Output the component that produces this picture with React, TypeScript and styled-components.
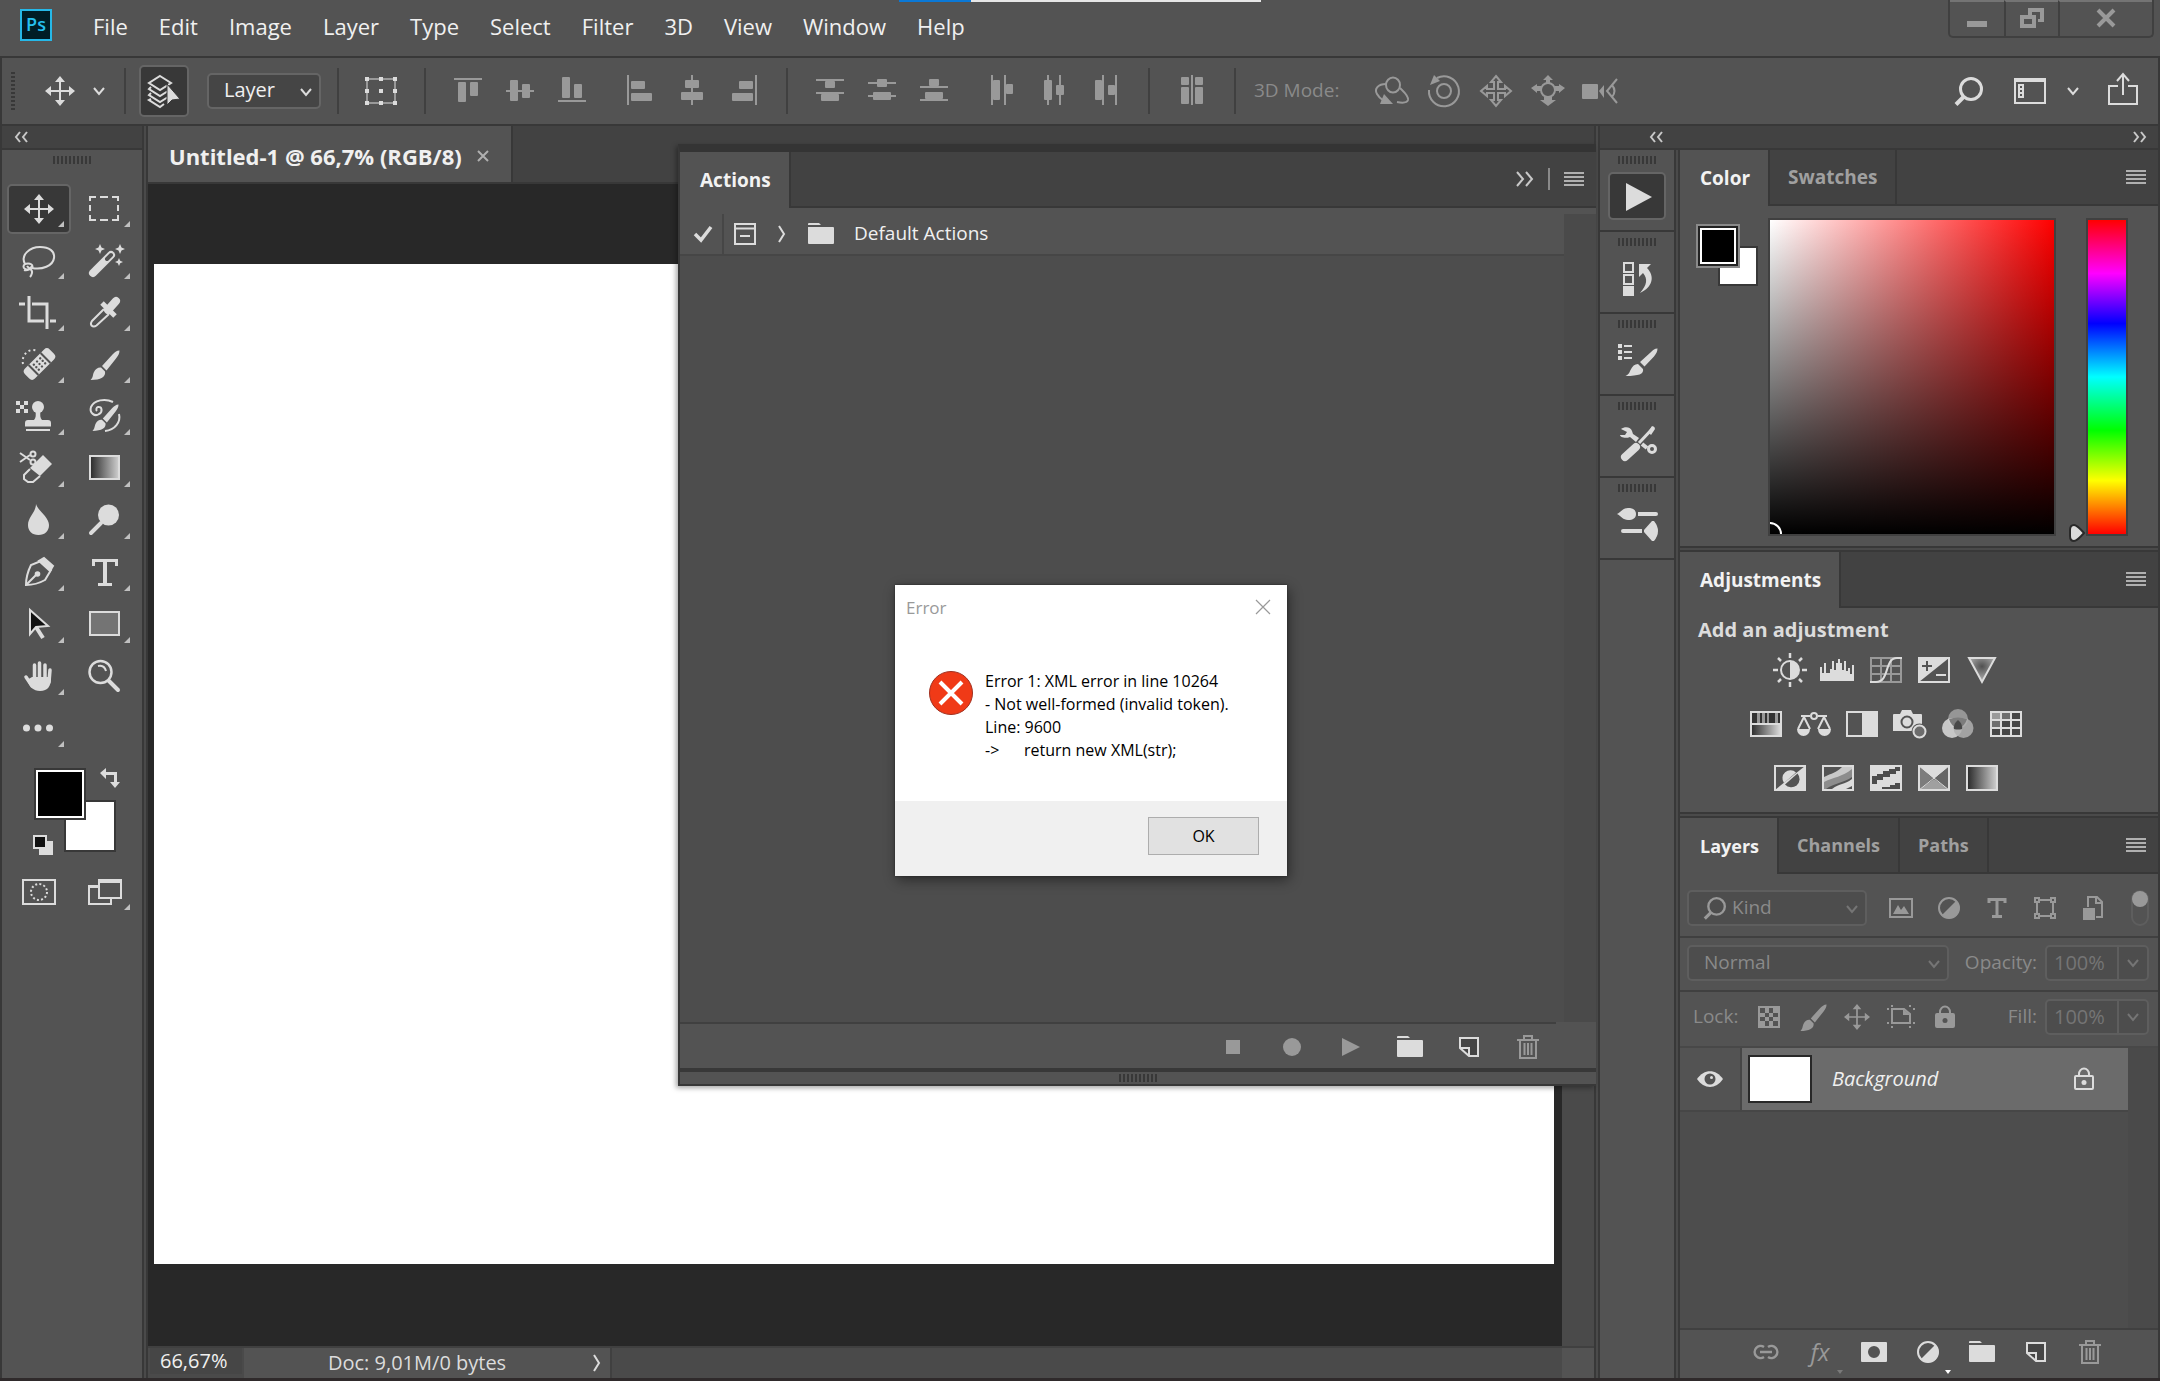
import React from "react";
import styled, { createGlobalStyle, css } from "styled-components";

const c = {
  panel: "#535353",
  header: "#424242",
  line: "#383838",
  gutter: "#4a4a4a",
  well: "#4d4d4d",
  canvas: "#282828",
  icon: "#dcdcdc",
  dim: "#999999",
  faint: "#8a8a8a",
};

const GlobalStyle = createGlobalStyle`
  * { box-sizing: border-box; }
  body {
    margin: 0;
    background: ${c.panel};
    color: #f0f0f0;
    font-family: "Open Sans", "Noto Sans", sans-serif;
    font-size: 19px;
    line-height: 24px;
    overflow: hidden;
  }
  button, select, input { font: inherit; color: inherit; margin: 0; }
  svg { display: block; flex: none; overflow: visible; }
`;

/* ---------- shell ---------- */

const Window = styled.div`
  position: relative;
  display: flex;
  flex-direction: column;
  height: 100vh;
  border-bottom: 3px solid #2f2a2b;
`;

const Workspace = styled.div`
  flex: 1;
  min-height: 0;
  display: flex;
  border-left: 2px solid ${c.line};
  border-right: 2px solid ${c.line};
`;

const Split = styled.div`
  flex: none;
  width: 6px;
  background: #4a4a4a;
  border-left: 2px solid ${c.line};
  border-right: 2px solid ${c.line};
`;

const BareButton = styled.button`
  display: flex;
  align-items: center;
  justify-content: center;
  padding: 0;
  border: 0;
  background: none;
`;

const Grip = styled.div<{ $vertical?: boolean }>`
  flex: none;
  align-self: center;
  width: ${(p) => (p.$vertical ? "4px" : "38px")};
  height: ${(p) => (p.$vertical ? "38px" : "8px")};
  background: repeating-linear-gradient(
    ${(p) => (p.$vertical ? "to bottom" : "to right")},
    ${c.line} 0 2px,
    transparent 2px 4px
  );
`;

/* ---------- menu bar ---------- */

const MenuBar = styled.header`
  display: flex;
  align-items: flex-start;
  height: 58px;
  padding-left: 20px;
  border-bottom: 2px solid ${c.line};
`;

const Logo = styled.div`
  width: 32px;
  height: 32px;
  margin: 9px 26px 0 0;
  border: 2px solid #26b8e8;
  background: #001d26;
  color: #26c0f0;
  font-size: 18px;
  font-weight: 600;
  line-height: 26px;
  text-align: center;
`;

const Menu = styled.nav`
  display: flex;
  flex: 1;
  gap: 1px;
`;

const MenuButton = styled(BareButton)`
  height: 52px;
  padding: 0 15px;
  font-size: 22px;
  line-height: 28px;
`;

const LoadStrip = styled.div`
  position: absolute;
  top: 0;
  left: 899px;
  width: 362px;
  height: 2px;
  background: linear-gradient(to right, #0a78d6 72px, #e6e6e6 72px);
`;

const WindowControls = styled.div`
  display: flex;
  height: 38px;
  margin-right: 6px;
  border: 2px solid #404040;
  border-top: 0;
  border-radius: 0 0 5px 5px;
`;

const WindowButton = styled(BareButton)<{ $wide?: boolean }>`
  width: ${(p) => (p.$wide ? "94px" : "54px")};
  padding-bottom: 2px;
  border-top: 2px solid #747474;
  & + & {
    border-left: 2px solid #404040;
  }
`;

/* ---------- options bar ---------- */

const OptionsBar = styled.div`
  display: flex;
  align-items: center;
  height: 68px;
  border: solid ${c.line};
  border-width: 0 2px 2px;
  padding: 0 20px 0 9px;
`;

const Rule = styled.span<{ $left?: number; $right?: number }>`
  flex: none;
  width: 2px;
  height: 46px;
  margin: 0 ${(p) => p.$right ?? 16}px 0 ${(p) => p.$left ?? 16}px;
  background: #404040;
`;

const OptionSlot = styled(BareButton)`
  width: 52px;
  height: 52px;
`;

const OptionGroup = styled.div`
  display: flex;
  gap: 16px;
`;

const OptionSet = styled.div`
  display: flex;
`;

const MoveIndicator = styled(BareButton)`
  gap: 18px;
  margin-left: 30px;
`;

const AutoSelect = styled(BareButton)`
  width: 50px;
  height: 52px;
  margin-right: 18px;
  border: 2px solid #656565;
  border-radius: 5px;
  background: ${c.line};
`;

const ModeLabel = styled.span`
  width: 112px;
  padding-bottom: 2px;
  color: ${c.faint};
  white-space: nowrap;
`;

const OptionsRight = styled.div`
  display: flex;
  align-items: center;
  margin-left: auto;
`;

const SpacedButton = styled(BareButton)<{ $gap: number }>`
  margin-left: ${(p) => p.$gap}px;
`;

/* ---------- form fields ---------- */

const Field = styled.span<{ $width: number; $dim?: boolean }>`
  position: relative;
  flex: none;
  display: flex;
  align-items: center;
  width: ${(p) => p.$width}px;
  height: 36px;
  border: 2px solid ${(p) => (p.$dim ? "#5e5e5e" : "#656565")};
  border-radius: 5px;
  background: ${(p) => (p.$dim ? c.well : "#454545")};
  color: ${(p) => (p.$dim ? c.faint : "#f0f0f0")};
  font-size: ${(p) => (p.$dim ? 19 : 20)}px;
  svg {
    position: absolute;
    pointer-events: none;
  }
  svg:last-child {
    right: 7px;
    top: 13px;
  }
  svg:first-child {
    left: 15px;
    top: 5px;
  }
`;

const Select = styled.select<{ $pad: number }>`
  width: 100%;
  height: 100%;
  padding: 0 0 2px ${(p) => p.$pad}px;
  border: 0;
  background: transparent;
  appearance: none;
`;

const Percent = styled.span`
  display: flex;
  flex: none;
  width: 104px;
  height: 36px;
  border: 2px solid #5e5e5e;
  border-radius: 5px;
  background: ${c.well};
  color: #757575;
  font-size: 20px;
`;

const PercentInput = styled.input`
  width: 70px;
  padding: 0 0 0 7px;
  border: 0;
  background: transparent;
`;

const PercentButton = styled(BareButton)`
  flex: 1;
  border-left: 2px solid #5e5e5e;
`;

/* ---------- toolbox ---------- */

const ToolBox = styled.aside`
  flex: none;
  display: flex;
  flex-direction: column;
  width: 140px;
`;

const DockHeader = styled.div`
  flex: none;
  display: flex;
  align-items: center;
  height: 24px;
  background: ${c.header};
  border-bottom: 2px solid ${c.line};
`;

const ToolHeader = styled(DockHeader)`
  padding-left: 12px;
`;

const ToolBody = styled.div`
  display: flex;
  flex-direction: column;
  padding: 6px 4px 0;
`;

const ToolGrid = styled.div<{ $first?: boolean }>`
  display: grid;
  grid-template-columns: 66px 66px;
  grid-auto-rows: 52px;
  margin-top: ${(p) => (p.$first ? 19 : 0)}px;
`;

const ToolButton = styled(BareButton)<{ $active?: boolean; $more?: boolean }>`
  position: relative;
  border: 2px solid transparent;
  margin: 1px;
  border-radius: 5px;
  ${(p) =>
    p.$active &&
    css`
      background: ${c.line};
      border-color: #656565;
    `}
  ${(p) =>
    p.$more &&
    css`
      &::after {
        content: "";
        position: absolute;
        right: 5px;
        bottom: 5px;
        border: 3px solid transparent;
        border-right-color: #c0c0c0;
        border-bottom-color: #c0c0c0;
      }
    `}
`;

const SwatchArea = styled.div`
  display: grid;
  grid-template-columns: 26px 30px 22px 30px;
  grid-template-rows: 32px 20px 32px 3px;
  margin: 13px 0 11px;
  padding-left: 2px;
`;

const Chip = styled(BareButton)<{ $color: string; $area: string; $ring?: boolean }>`
  grid-area: ${(p) => p.$area};
  border: 2px solid ${c.line};
  background: ${(p) => p.$color};
  box-shadow: ${(p) => (p.$ring ? "inset 0 0 0 2px #fff" : "none")};
  z-index: ${(p) => (p.$ring ? 1 : 0)};
`;

const SwapButton = styled(BareButton)`
  grid-area: 1 / 4 / 2 / 5;
  align-items: flex-start;
  justify-content: flex-end;
  margin-right: -4px;
`;

const DefaultButton = styled(BareButton)`
  grid-area: 3 / 1 / 5 / 3;
  align-items: flex-end;
  justify-content: flex-start;
  padding-left: 25px;
`;

/* ---------- document ---------- */

const Document = styled.main`
  position: relative;
  flex: 1;
  min-width: 0;
  display: flex;
  flex-direction: column;
`;

const DocTabs = styled.div`
  display: flex;
  height: 58px;
  background: ${c.header};
  border-bottom: 2px solid ${c.line};
`;

const DocTab = styled.div`
  display: flex;
  align-items: center;
  gap: 15px;
  padding: 3px 22px 0 21px;
  background: ${c.panel};
  border-right: 2px solid ${c.line};
  font-size: 22px;
  font-weight: 700;
  white-space: nowrap;
`;

const Stage = styled.div`
  flex: 1;
  display: flex;
  background: ${c.canvas};
`;

const Paper = styled.div`
  flex: 1;
  margin: 80px 8px 82px 6px;
  background: #fff;
`;

const Gutter = styled.div<{ $width: number }>`
  flex: none;
  width: ${(p) => p.$width}px;
  background: ${c.gutter};
`;

const StatusBar = styled.footer`
  display: flex;
  height: 32px;
  border-top: 2px solid #404040;
  background: ${c.gutter};
  font-size: 20px;
`;

const ZoomInput = styled.input`
  width: 92px;
  height: 26px;
  margin: 0 2px;
  padding: 0 0 2px 10px;
  border: 0;
  background: #464646;
`;

const DocInfo = styled(BareButton)`
  width: 368px;
  justify-content: space-between;
  padding: 0 9px 0 84px;
  background: ${c.panel};
  border-right: 2px solid #404040;
  color: ${c.icon};
`;

const StatusCorner = styled.div`
  width: 32px;
  margin-left: auto;
  background: ${c.panel};
`;

/* ---------- tab strips ---------- */

const Tab = styled.button<{ $active?: boolean }>`
  padding: 0 18px 0;
  border: solid ${c.line};
  border-width: 0 2px ${(p) => (p.$active ? 0 : 2)}px 0;
  background: ${(p) => (p.$active ? c.panel : "transparent")};
  color: ${(p) => (p.$active ? "#f2f2f2" : "#a0a0a0")};
  font-weight: 700;
  &:first-child {
    padding-left: 20px;
  }
`;

const TabStrip = styled.div<{ $compact?: boolean }>`
  flex: none;
  display: flex;
  align-items: stretch;
  height: 56px;
  background: ${c.header};
  ${Tab} {
    font-size: ${(p) => (p.$compact ? 18 : 19)}px;
  }
`;

const TabRest = styled.div`
  flex: 1;
  display: flex;
  align-items: center;
  justify-content: flex-end;
  gap: 14px;
  padding-right: 12px;
  border-bottom: 2px solid ${c.line};
`;

const TabRule = styled.span`
  width: 2px;
  height: 22px;
  background: #8a8a8a;
`;

/* ---------- actions panel ---------- */

const ActionsPanel = styled.section`
  position: absolute;
  top: 18px;
  left: 530px;
  right: -2px;
  height: 942px;
  display: flex;
  flex-direction: column;
  border: solid ${c.line};
  border-width: 8px 0 2px 2px;
  border-top-color: #343434;
  background: ${c.panel};
  box-shadow: -2px 2px 5px rgba(0, 0, 0, 0.35);
`;

const ActionsBody = styled.div`
  flex: 1;
  display: flex;
  margin-top: 6px;
`;

const ActionsList = styled.div`
  flex: 1;
  background: ${c.well};
`;

const ActionRow = styled.div`
  display: flex;
  align-items: center;
  height: 42px;
  background: ${c.panel};
  border-bottom: 2px solid #464646;
`;

const ActionName = styled.span`
  padding-bottom: 2px;
`;

const CheckLabel = styled.label`
  position: relative;
  display: flex;
  align-items: center;
  justify-content: center;
  align-self: stretch;
  width: 44px;
  padding-left: 3px;
  border-right: 2px solid #464646;
  input {
    position: absolute;
    opacity: 0;
  }
`;

const RowIcons = styled.span`
  display: flex;
  align-items: center;
  gap: 22px;
  padding: 0 20px 0 10px;
`;

const ActionsFooter = styled.div`
  display: grid;
  grid-template-columns: repeat(6, 59px);
  justify-content: end;
  align-items: center;
  height: 44px;
  padding: 2px 39px 0 0;
`;

const FooterRule = styled.div`
  height: 2px;
  margin-right: 40px;
  background: #404040;
`;

const ResizeBar = styled.div`
  display: flex;
  justify-content: center;
  align-items: flex-start;
  height: 16px;
  border-top: 4px solid ${c.line};
`;

/* ---------- icon dock ---------- */

const RightSide = styled.div`
  flex: none;
  display: flex;
  flex-direction: column;
`;

const SideHeader = styled(DockHeader)`
  justify-content: space-between;
  padding: 0 11px 0 49px;
`;

const SideBody = styled.div`
  flex: 1;
  min-height: 0;
  display: flex;
`;

const IconDock = styled.div`
  width: 74px;
`;

const DockGroup = styled.div`
  display: flex;
  flex-direction: column;
  align-items: center;
  gap: 8px;
  height: 82px;
  padding-top: 6px;
  border-bottom: 2px solid ${c.line};
`;

const DockButton = styled(BareButton)<{ $active?: boolean }>`
  width: 58px;
  height: 48px;
  padding: 2px 0 0 2px;
  border-radius: 5px;
  border: 2px solid ${(p) => (p.$active ? "#656565" : "transparent")};
  background: ${(p) => (p.$active ? c.line : "transparent")};
`;

/* ---------- right panels ---------- */

const Panels = styled.div`
  display: flex;
  flex-direction: column;
  gap: 2px;
  width: 478px;
  background: #4a4a4a;
`;

const Panel = styled.section<{ $grow?: boolean; $first?: boolean }>`
  display: flex;
  flex-direction: column;
  flex: ${(p) => (p.$grow ? "1" : "none")};
  background: ${c.panel};
  border-bottom: ${(p) => (p.$grow ? 0 : 2)}px solid ${c.line};
  border-top: ${(p) => (p.$first ? 0 : 2)}px solid ${c.line};
`;

const ColorBody = styled.div`
  display: flex;
  height: 340px;
  padding: 12px 30px 0 16px;
`;

const ColorChips = styled.div`
  display: grid;
  grid-template-columns: 22px 22px 18px;
  grid-template-rows: 22px 22px 18px;
  width: 72px;
  padding-top: 6px;
`;

const ColorChip = styled(BareButton)<{ $area: string; $front?: boolean }>`
  grid-area: ${(p) => p.$area};
  border: 2px solid ${(p) => (p.$front ? "#8a8a8a" : c.line)};
  background: ${(p) => (p.$front ? "#000" : "#fff")};
  box-shadow: ${(p) =>
    p.$front ? "inset 0 0 0 2px #222, inset 0 0 0 4px #fff" : "none"};
  z-index: ${(p) => (p.$front ? 1 : 0)};
`;

const ColorField = styled.div`
  flex: 1;
  height: 318px;
  border: 2px solid #404040;
  overflow: hidden;
  display: flex;
  align-items: flex-end;
  background: linear-gradient(to bottom, transparent, #000),
    linear-gradient(to right, #fff, #f00);
`;

const HueColumn = styled.label`
  position: relative;
  display: flex;
  align-items: flex-end;
  margin-left: 12px;
  height: 324px;
  gap: 1px;
  input {
    position: absolute;
    inset: 0;
    width: 100%;
    opacity: 0;
  }
`;

const HueBar = styled.span`
  align-self: flex-start;
  width: 42px;
  height: 318px;
  border: 2px solid #404040;
  background: linear-gradient(
    to bottom,
    #f00,
    #f0f 17%,
    #00f 33%,
    #0ff 50%,
    #0f0 67%,
    #ff0 83%,
    #f00
  );
`;

const AdjustBody = styled.div`
  height: 204px;
  padding: 9px 18px 0;
`;

const AdjustTitle = styled.h2`
  margin: 0;
  color: ${c.icon};
  font-size: 20px;
  font-weight: 700;
  line-height: 26px;
`;

const AdjustRows = styled.div`
  width: 288px;
  margin-left: 44px;
`;

const AdjustRow = styled.div`
  display: flex;
  justify-content: center;
  height: 54px;
`;

const AdjustButton = styled(BareButton)`
  width: 48px;
`;

const LayerBar = styled.div<{ $tall?: boolean; $last?: boolean }>`
  display: flex;
  align-items: center;
  height: ${(p) => (p.$tall ? 64 : p.$last ? 56 : 54)}px;
  padding: ${(p) => (p.$tall ? "6px 9px 0 7px" : p.$last ? "0 9px 4px 7px" : "0 9px 2px 7px")};
  border-bottom: 2px solid ${(p) => (p.$last ? "#484848" : "#404040")};
  color: ${c.faint};
`;

const FilterIcons = styled.div`
  display: grid;
  grid-template-columns: repeat(5, 48px);
  margin-left: 10px;
  flex: 1;
`;

const LockIcons = styled.div`
  display: grid;
  grid-template-columns: repeat(5, 44px);
  margin-left: 8px;
`;

const FilterToggle = styled.label`
  display: flex;
  width: 18px;
  height: 36px;
  border: 2px solid #5e5e5e;
  border-radius: 9px;
  input {
    appearance: none;
    flex: none;
    width: 16px;
    height: 16px;
    margin: -1px;
    border-radius: 50%;
    background: ${c.dim};
  }
`;

const PushLabel = styled.label`
  margin: 0 8px 0 auto;
  padding-bottom: 2px;
`;

const LockLabel = styled.span`
  padding: 0 0 2px 6px;
  width: 52px;
`;

const LayerArea = styled.div`
  flex: 1;
  display: flex;
`;

const LayerList = styled.div`
  flex: 1;
  background: ${c.well};
`;

const LayerRow = styled.div`
  display: flex;
  height: 64px;
  border-bottom: 2px solid #464646;
`;

const EyeCell = styled(BareButton)`
  width: 62px;
  background: ${c.panel};
  border-right: 2px solid #464646;
`;

const LayerMain = styled.div`
  flex: 1;
  display: flex;
  align-items: center;
  gap: 20px;
  padding: 0 34px 0 6px;
  background: #6b6b6b;
  font-size: 20px;
  font-style: italic;
  svg {
    margin-left: auto;
  }
`;

const Thumb = styled.span`
  width: 64px;
  height: 48px;
  border: 2px solid ${c.canvas};
  background: #fff;
`;

const LayerFooter = styled.div`
  display: grid;
  grid-template-columns: repeat(7, 54px);
  justify-content: end;
  align-items: stretch;
  height: 50px;
  padding-right: 41px;
  border-top: 2px solid #404040;
`;

const FooterButton = styled(BareButton)<{ $marker?: string }>`
  position: relative;
  padding-bottom: 4px;
  &::after {
    content: ${(p) => (p.$marker ? '""' : "none")};
    position: absolute;
    right: 4px;
    bottom: 4px;
    border: solid transparent;
    border-width: 4px 3px 0;
    border-top-color: ${(p) => p.$marker};
  }
`;

const FxText = styled.span`
  color: ${c.dim};
  font-size: 24px;
  font-style: italic;
`;

/* ---------- dialog ---------- */

const Dialog = styled.section`
  position: absolute;
  top: 585px;
  left: 895px;
  width: 392px;
  background: #fff;
  color: #000;
  font-size: 16px;
  line-height: 23px;
  box-shadow: 0 0 2px #222, 2px 4px 12px rgba(0, 0, 0, 0.45);
`;

const DialogTitle = styled.header`
  display: flex;
  align-items: center;
  justify-content: space-between;
  height: 44px;
  padding: 0 16px 0 11px;
  color: #999;
  font-size: 17px;
`;

const DialogBody = styled.div`
  display: flex;
  gap: 12px;
  height: 172px;
  padding: 41px 0 0 34px;
`;

const DialogText = styled.p`
  margin: 0;
  white-space: pre;
  tab-size: 39px;
`;

const DialogIcon = styled.span`
  padding-top: 1px;
`;

const DialogFooter = styled.footer`
  display: flex;
  justify-content: flex-end;
  height: 75px;
  padding: 16px 28px 0 0;
  background: #f0f0f0;
`;

const OkButton = styled.button`
  width: 111px;
  height: 38px;
  border: 1px solid #adadad;
  background: #e1e1e1;
`;

/* ---------- drawings ---------- */

type G = { w?: number; h?: number; color?: string; children?: React.ReactNode };
const Glyph = ({ w = 36, h = 36, color = c.icon, children }: G) => (
  <svg width={w} height={h} viewBox={`0 0 ${w} ${h}`} fill={color} stroke="none" aria-hidden="true">
    {children}
  </svg>
);

const Bars = ({ r, w = 28 }: { r: number[][]; w?: number }) => (
  <Glyph w={w} h={32} color={c.dim}>
    {r.map((b, i) => (
      <rect key={i} x={b[0]} y={b[1]} width={b[2]} height={b[3]} rx={b[2] > 3 && b[3] > 3 ? 1 : 0} />
    ))}
  </Glyph>
);

const Chevron = ({ color = c.icon, w = 12 }: { color?: string; w?: number }) => (
  <Glyph w={w} h={8} color="none">
    <path d={`M1 1l${w / 2 - 1} 6l${w / 2 - 1}-6`} stroke={color} strokeWidth="2" />
  </Glyph>
);

const Double = ({ left, w = 14, h = 10 }: { left?: boolean; w?: number; h?: number }) => (
  <Glyph w={w} h={h} color="none">
    <g transform={left ? `translate(${w} 0) scale(-1 1)` : undefined} stroke="#c8c8c8" strokeWidth="2">
      <path d={`M1 0l${w / 2 - 3} ${h / 2}l-${w / 2 - 3} ${h / 2}`} />
      <path d={`M${w / 2 + 1} 0l${w / 2 - 3} ${h / 2}l-${w / 2 - 3} ${h / 2}`} />
    </g>
  </Glyph>
);

const Hamburger = () => (
  <Glyph w={20} h={14} color="#b0b0b0">
    <path d="M0 0h20v2H0zM0 4h20v2H0zM0 8h20v2H0zM0 12h20v2H0z" />
  </Glyph>
);

const MoveArrows = ({ s = 30, color = c.icon }: { s?: number; color?: string }) => (
  <svg width={s} height={s} viewBox="0 0 30 30" fill={color} aria-hidden="true">
    <path d="M15 0l5 6h-4v8h8v-4l6 5-6 5v-4h-8v8h4l-5 6-5-6h4v-8H6v4l-6-5 6-5v4h8V6h-4z" />
  </svg>
);

const Brush = ({ s = 30, color = c.icon }: { s?: number; color?: string }) => (
  <svg width={s} height={s} viewBox="0 0 30 30" fill={color} aria-hidden="true">
    <path d="M29.5 0.5c-3 0-5 2-7 4L12 16l4.500 4.500L26 8.500c2-2.500 3.500-5 3.500-8zM11 17.500l4 4c1 5-4 8.500-14.500 8.500 3-3 2-5 3.500-8 1.500-3.500 4.500-5 7-4.500z" />
  </svg>
);

const Folder = ({ color = c.icon }) => (
  <Glyph w={26} h={22} color={color}>
    <path d="M0 1q0-1 1-1h10l2 2H0zM0 4h25q1 0 1 1v15q0 1-1 1H1q-1 0-1-1z" />
  </Glyph>
);

const NewPage = () => (
  <Glyph w={20} h={20} color="none">
    <path d="M1 11V1h18v18h-9z" fill="#454545" stroke={c.icon} strokeWidth="2" />
    <path d="M1 11h9v8" stroke={c.icon} strokeWidth="2" />
  </Glyph>
);

const Trash = () => (
  <Glyph w={22} h={24} color="none">
    <path d="M0 5h22M7 4.500V1h8v3.500M3 6v17h16V6M7.500 8v12M11 8v12M14.500 8v12" stroke={c.dim} strokeWidth="2" />
  </Glyph>
);

const HalfDisc = ({ color = c.icon }) => (
  <Glyph w={22} h={22} color={color}>
    <circle cx="11" cy="11" r="10" fill="none" stroke={color} strokeWidth="2" />
    <path d="M18.500 3.500a10.500 10.500 0 0 1-15 15z" />
  </Glyph>
);

const Lens = ({ s = 28, color = c.icon }: { s?: number; color?: string }) => (
  <svg width={s} height={s} viewBox="0 0 28 28" fill="none" stroke={color} aria-hidden="true">
    <circle cx="16" cy="12" r="10.500" strokeWidth="3" />
    <path d="M9 19.500L1 27.500" strokeWidth="4" />
  </svg>
);

const TransformBox = () => (
  <Glyph w={32} h={30} color="none">
    <rect x="2" y="3" width="28" height="24" stroke={c.dim} strokeWidth="2" />
    <path
      d="M0 1h4v4H0zM14 1h4v4h-4zM28 1h4v4h-4zM0 13h4v4H0zM28 13h4v4h-4zM0 25h4v4H0zM14 25h4v4h-4zM28 25h4v4h-4zM14 13h4v4h-4z"
      fill={c.icon}
    />
  </Glyph>
);

const LayersCursor = () => (
  <Glyph w={32} h={34} color="none">
    <g stroke={c.icon} strokeWidth="2">
      <path d="M12 2l11 7-11 7L1 9z" />
      <path d="M3 13l-2 2 11 7 8-5M3 19l-2 2 11 7 8-5M3 25l-2 1 11 7 4-3" />
    </g>
    <path d="M19 10v21l5-5 8-1z" fill={c.icon} stroke={c.line} strokeWidth="1" />
  </Glyph>
);

const Sparkle = ({ x, y, r }: { x: number; y: number; r: number }) => (
  <path
    d={`M${x} ${y - r}l${r * 0.3} ${r * 0.7} ${r * 0.7} ${r * 0.3}-${r * 0.7} ${r * 0.3}-${r * 0.3} ${r * 0.7}-${r * 0.3}-${r * 0.7}-${r * 0.7}-${r * 0.3} ${r * 0.7}-${r * 0.3}z`}
  />
);

const tools: { name: string; more?: boolean; active?: boolean; art: React.ReactNode }[] = [
  { name: "Move", more: true, active: true, art: <MoveArrows /> },
  {
    name: "Marquee",
    more: true,
    art: (
      <Glyph>
        <path
          d="M3 10V6h6M13 6h8M25 6h6v4M31 14v6M31 24v5h-6M21 29h-8M9 29H3v-5M3 20v-6"
          fill="none"
          stroke={c.icon}
          strokeWidth="2"
        />
      </Glyph>
    ),
  },
  {
    name: "Lasso",
    more: true,
    art: (
      <Glyph>
        <g fill="none" stroke={c.icon} strokeWidth="2">
          <path d="M4 21C-1 12 9 4 19 4c9 0 15 4 14 11-1 8-12 12-22 10" />
          <ellipse cx="7" cy="23.500" rx="4.500" ry="3" />
          <path d="M6 23c2 3 6 3 5 7-.5 2-1 3-2 4M3 27c3 1 6-1 8-4" />
        </g>
      </Glyph>
    ),
  },
  {
    name: "Magic wand",
    more: true,
    art: (
      <Glyph>
        <path d="M6 30L24 12" stroke={c.icon} strokeWidth="8" strokeLinecap="round" />
        <path d="M20 16l4-4" stroke={c.panel} strokeWidth="4" strokeLinecap="round" />
        <Sparkle x={13} y={6} r={5} />
        <Sparkle x={33} y={6} r={5} />
        <Sparkle x={32} y={19} r={4} />
      </Glyph>
    ),
  },
  {
    name: "Crop",
    more: true,
    art: (
      <Glyph>
        <path d="M-2 9h6M8 1v25h15M11 9h15v25M29 26h6" fill="none" stroke={c.icon} strokeWidth="3" />
      </Glyph>
    ),
  },
  {
    name: "Eyedropper",
    more: true,
    art: (
      <Glyph>
        <path d="M21 15L29 6" stroke={c.icon} strokeWidth="8" strokeLinecap="round" />
        <path d="M15 8l13 13" stroke={c.icon} strokeWidth="5" />
        <path
          d="M17 14L5 26c-1.500 2-1.500 3-.5 4.500 1.500 1.500 3 1.500 5 0L22 19"
          fill="none"
          stroke={c.icon}
          strokeWidth="2"
        />
      </Glyph>
    ),
  },
  {
    name: "Healing brush",
    more: true,
    art: (
      <Glyph>
        <path d="M2 17C0 8 8 0 17 4" fill="none" stroke={c.icon} strokeWidth="2" strokeDasharray="2 3" />
        <g transform="rotate(-45 18.500 17)">
          <rect x="1" y="10" width="35" height="14" rx="4" />
          <path d="M10 10v14M27 10v14" stroke={c.panel} strokeWidth="2" />
          <g fill={c.panel}>
            <circle cx="14" cy="13.500" r="1.200" /><circle cx="18.500" cy="13.500" r="1.200" /><circle cx="23" cy="13.500" r="1.200" />
            <circle cx="14" cy="17" r="1.200" /><circle cx="18.500" cy="17" r="1.200" /><circle cx="23" cy="17" r="1.200" />
            <circle cx="14" cy="20.500" r="1.200" /><circle cx="18.500" cy="20.500" r="1.200" /><circle cx="23" cy="20.500" r="1.200" />
          </g>
        </g>
      </Glyph>
    ),
  },
  { name: "Brush", more: true, art: <Brush /> },
  {
    name: "Clone stamp",
    more: true,
    art: (
      <Glyph>
        <path d="M-5 2h4v4h-4zM3 2h4v4H3zM-1 6h4v4h-4zM-5 10h4v4h-4zM3 10h4v4H3z" />
        <circle cx="17" cy="8" r="6" />
        <path d="M14.500 12h5c-.5 4-.5 7 1.500 9h6q3 0 3 3v3.500H4V24q0-3 3-3h6c2-2 2-5 1.500-9zM5 30h24v2H5z" />
      </Glyph>
    ),
  },
  {
    name: "History brush",
    more: true,
    art: (
      <Glyph>
        <g transform="translate(5 5) scale(.9)">
          <path d="M29.500 0.500c-3 0-5 2-7 4L12 16l4.500 4.500L26 8.500c2-2.500 3.500-5 3.500-8zM11 17.500l4 4c1 5-4 8.500-14.500 8.500 3-3 2-5 3.500-8 1.500-3.500 4.500-5 7-4.500z" />
        </g>
        <path
          d="M26 3C18-1 7 1 4 8c-2 6 4 10 8 7 4-2 3-8-1-7-2 .5-2 3-1 4M32 15c2 8-4 16-14 17"
          fill="none"
          stroke={c.icon}
          strokeWidth="2"
        />
      </Glyph>
    ),
  },
  {
    name: "Background eraser",
    more: true,
    art: (
      <Glyph>
        <path d="M22 4l9 9-12 12-10-8z" />
        <path d="M9 18l-6 6v4l4 3h5l7-6" fill="none" stroke={c.icon} strokeWidth="2" />
        <g fill="none" stroke={c.icon} strokeWidth="2">
          <path d="M-1 2l10 7M-1 11l10-7" />
          <circle cx="12" cy="3" r="2.500" />
          <circle cx="12" cy="11" r="2.500" />
        </g>
      </Glyph>
    ),
  },
  {
    name: "Gradient",
    more: true,
    art: (
      <Glyph>
        <linearGradient id="toolGradient">
          <stop offset="0" stopColor="#282828" />
          <stop offset="1" stopColor="#d0d0d0" />
        </linearGradient>
        <rect x="3" y="5" width="29" height="23" fill="url(#toolGradient)" stroke={c.icon} strokeWidth="2" />
      </Glyph>
    ),
  },
  {
    name: "Blur",
    more: true,
    art: (
      <Glyph>
        <path d="M15 1c2 7 13 13 13 21 0 6-4 10-10.500 10S7 28 7 22C7 14 15 9 15 1z" />
      </Glyph>
    ),
  },
  {
    name: "Dodge",
    more: true,
    art: (
      <Glyph>
        <circle cx="21.500" cy="12" r="10.500" />
        <path d="M14 20L4 30" stroke={c.icon} strokeWidth="4" strokeLinecap="round" />
      </Glyph>
    ),
  },
  {
    name: "Pen",
    more: true,
    art: (
      <Glyph>
        <path d="M20 6l-10 4c-3 6-5 12-5 20 6 0 12-1 19-5l6-10z" fill="none" stroke={c.icon} strokeWidth="2" />
        <path d="M23 3l9 8-3 5-11-10zM6 29l10-10" stroke={c.icon} strokeWidth="2" />
        <circle cx="16.500" cy="19" r="2.800" />
      </Glyph>
    ),
  },
  {
    name: "Type",
    more: true,
    art: (
      <Glyph>
        <path d="M6.500 11V5.500h23V11M18 6v24M11 29.500h14" fill="none" stroke={c.icon} strokeWidth="3" />
        <path d="M18 6v24" stroke={c.icon} strokeWidth="4" />
      </Glyph>
    ),
  },
  {
    name: "Path selection",
    more: true,
    art: (
      <Glyph>
        <path d="M15 20l7 11" stroke={c.icon} strokeWidth="4" />
        <path d="M9 3v24l6-7 12-1z" fill="#111" stroke={c.icon} strokeWidth="2" />
      </Glyph>
    ),
  },
  {
    name: "Rectangle",
    more: true,
    art: (
      <Glyph>
        <rect x="3" y="5" width="29" height="23" fill="#747474" stroke={c.icon} strokeWidth="2" />
      </Glyph>
    ),
  },
  {
    name: "Hand",
    more: true,
    art: (
      <Glyph>
        <g stroke={c.icon} strokeWidth="3.500" strokeLinecap="round">
          <path d="M13.500 6v14M18.500 4v14M24 6v14M29 11l-1 12M5 18l6 9" />
        </g>
        <path d="M11 18h19c0 9-3 14-11 14-7 0-10-4-13-11z" />
      </Glyph>
    ),
  },
  {
    name: "Zoom",
    art: (
      <Glyph>
        <g fill="none" stroke={c.icon} strokeWidth="2">
          <circle cx="13.500" cy="13" r="11" strokeWidth="2.500" />
          <path d="M11 7c4-1 7 1 8 5" />
          <path d="M22 22l9 9" strokeWidth="4" strokeLinecap="round" />
        </g>
      </Glyph>
    ),
  },
  {
    name: "Edit toolbar",
    more: true,
    art: (
      <Glyph>
        <circle cx="5.500" cy="17" r="3.500" />
        <circle cx="17" cy="17" r="3.500" />
        <circle cx="28.500" cy="17" r="3.500" />
      </Glyph>
    ),
  },
];

const QuickMask = () => (
  <Glyph w={34} h={26} color="none">
    <rect x="1" y="1" width="32" height="24" stroke={c.icon} strokeWidth="2" />
    <circle cx="17" cy="13" r="8" stroke={c.icon} strokeWidth="2" strokeDasharray="2 2.200" />
  </Glyph>
);

const ScreenMode = () => (
  <Glyph w={34} h={26} color="none">
    <path d="M11 7H1v18h22v-6" stroke={c.icon} strokeWidth="2" />
    <rect x="11" y="2" width="22" height="17" stroke={c.icon} strokeWidth="2" />
    <path d="M10 0h24v4H10zM0 6h10v3H0z" fill={c.icon} />
  </Glyph>
);

const Frame = ({ children, fill = "none" }: { children?: React.ReactNode; fill?: string }) => (
  <Glyph w={32} h={26}>
    {children}
    <rect x="1" y="1" width="30" height="24" fill={fill} stroke={c.icon} strokeWidth="2" />
  </Glyph>
);

const adjustments: { name: string; art: React.ReactNode }[][] = [
  [
    {
      name: "Brightness/Contrast",
      art: (
        <Glyph w={34} h={34}>
          <circle cx="17" cy="17" r="9" fill="none" stroke={c.icon} strokeWidth="2" />
          <path d="M17 8a9 9 0 0 1 0 18z" />
          <path
            d="M17 0v5M17 29v5M0 17h5M29 17h5M5 5l3 3M26 26l3 3M5 29l3-3M26 8l3-3"
            stroke={c.icon}
            strokeWidth="2.500"
          />
        </Glyph>
      ),
    },
    {
      name: "Levels",
      art: (
        <Glyph w={36} h={26}>
          <path d="M0 24V10h2v6h2V6h2v10h4V12h2V4h2v9h2V6h2V2h2v4h2v7h2V4h2v10h2V11h2v6h2V8h2v16z" />
        </Glyph>
      ),
    },
    {
      name: "Curves",
      art: (
        <Glyph w={32} h={26} color="none">
          <path d="M1 1h30v24H1zM11 1v24M21 1v24M1 9h30M1 17h30" stroke={c.dim} strokeWidth="2" />
          <path d="M0 25h6C20 25 14 1 27 1h5" stroke={c.icon} strokeWidth="2" />
        </Glyph>
      ),
    },
    {
      name: "Exposure",
      art: (
        <Frame>
          <path d="M1 1h30L1 25z" />
          <path d="M4 9h10M9 4v10" stroke={c.panel} strokeWidth="2" />
          <path d="M18 18h10" stroke={c.icon} strokeWidth="2" />
        </Frame>
      ),
    },
    {
      name: "Vibrance",
      art: (
        <Glyph w={30} h={28}>
          <radialGradient id="vibrance" cx=".5" cy=".35" r=".5">
            <stop offset="0" stopColor="#505050" />
            <stop offset="1" stopColor="#a0a0a0" />
          </radialGradient>
          <path d="M2 2h26L15 26z" fill="url(#vibrance)" stroke={c.icon} strokeWidth="2" />
        </Glyph>
      ),
    },
  ],
  [
    {
      name: "Hue/Saturation",
      art: (
        <Frame>
          <linearGradient id="hueFade">
            <stop offset="0" stopColor="#303030" />
            <stop offset="1" stopColor="#d8d8d8" />
          </linearGradient>
          <path d="M2 2h5v10H2zM10 2h2v10h-2zM15 2h2v10h-2zM19 2h6v10h-6zM28 2h2v10h-2z" fill="#333" />
          <path d="M7 2h3v10H7zM12 2h3v10h-3zM17 2h2v10h-2zM25 2h3v10h-3z" fill="#999" />
          <rect x="2" y="14" width="28" height="10" fill="url(#hueFade)" />
          <rect x="1" y="12" width="30" height="2" />
        </Frame>
      ),
    },
    {
      name: "Color Balance",
      art: (
        <Glyph w={34} h={26} color="none">
          <path d="M4 5h9M21 5h9M7 6L1 18M7 6l6 12M27 6l-6 12M27 6l6 12" stroke={c.icon} strokeWidth="2" />
          <circle cx="17" cy="5" r="3" stroke={c.icon} strokeWidth="2" />
          <path d="M0 18h13a6.500 7 0 0 1-13 0zM21 18h13a6.500 7 0 0 1-13 0z" fill={c.icon} />
        </Glyph>
      ),
    },
    {
      name: "Black & White",
      art: (
        <Frame>
          <path d="M16 1h15v24H16z" />
        </Frame>
      ),
    },
    {
      name: "Photo Filter",
      art: (
        <Glyph w={34} h={30}>
          <path d="M0 6q0-1 1-1h6l2-4h9l2 4h8q1 0 1 1v16H0z" />
          <circle cx="14" cy="13" r="5.500" fill={c.icon} stroke={c.panel} strokeWidth="2" />
          <circle cx="26.500" cy="22.500" r="8" fill={c.panel} />
          <circle cx="26.500" cy="22.500" r="6" fill="#6c6c6c" stroke={c.icon} strokeWidth="2" />
        </Glyph>
      ),
    },
    {
      name: "Channel Mixer",
      art: (
        <Glyph w={32} h={30}>
          <circle cx="16" cy="10" r="10" fill="#969696" />
          <circle cx="10" cy="19" r="10" fill="#d4d4d4" opacity=".9" />
          <circle cx="21.500" cy="19" r="10" fill="#b0b0b0" opacity=".85" />
          <path d="M7 10q9-3 18 0-2 7-9 10-7-3-9-10z" fill="#7c7c7c" />
          <path d="M16 11q5 4 4 9-4 1-8 0-1-5 4-9z" fill="#484848" />
        </Glyph>
      ),
    },
    {
      name: "Color Lookup",
      art: (
        <Frame>
          <path d="M2 2h28v22H2z" fill="#454545" />
          <path d="M2 2h8v6H2z" fill="#999" />
          <path d="M12 2h8v6h-8zM2 10h8v6H2z" fill="#707070" />
          <path d="M11 1v24M21 1v24M1 9h30M1 17h30" stroke={c.icon} strokeWidth="2" />
        </Frame>
      ),
    },
  ],
  [
    {
      name: "Invert",
      art: (
        <Frame>
          <path d="M31 1v24H1z" />
          <path d="M22 7.500A8 8 0 0 0 10 18z" />
          <path d="M23.500 8.500A8 8 0 0 1 11 19.500z" fill={c.panel} />
        </Frame>
      ),
    },
    {
      name: "Posterize",
      art: (
        <Frame>
          <path d="M2 12C10 8 14 8 20 2h10v3C22 12 12 12 2 21z" fill="#c8c8c8" />
          <path d="M2 17C12 12 20 12 30 4v8C22 18 12 18 4 24H2z" fill="#8c8c8c" />
          <path d="M10 24c8-6 12-4 20-10v7l-6 3z" fill={c.icon} />
        </Frame>
      ),
    },
    {
      name: "Threshold",
      art: (
        <Frame>
          <path d="M1 1h30v24H1z" />
          <path
            d="M2 19v-8h5V9h6V6h6V4h6V2h5v4h-4v3h-6v3h-7v3H7v4zM12 24v-2h8v-2h5v-2h5v6z"
            fill="#4c4c4c"
          />
        </Frame>
      ),
    },
    {
      name: "Selective Color",
      art: (
        <Frame>
          <path d="M1 1h30L16 14z" />
          <path d="M2 2l13 11L2 24z" fill="#7c7c7c" />
          <path d="M30 2L17 13l13 11z" fill="#666" />
          <path d="M16 14l14 10H2z" fill="#a0a0a0" />
          <path d="M1 1l30 24M31 1L1 25" stroke={c.icon} strokeWidth="1" />
        </Frame>
      ),
    },
    {
      name: "Gradient Map",
      art: <Frame fill="url(#toolGradient)" />,
    },
  ],
];

const FilterImage = () => (
  <Glyph w={24} h={20} color={c.dim}>
    <rect x="1" y="1" width="22" height="18" fill="none" stroke={c.dim} strokeWidth="2" />
    <path d="M4 16l5-9 3 5 3-4 5 8z" />
  </Glyph>
);

const FilterType = () => (
  <Glyph w={20} h={22} color="none">
    <path d="M2 6V2.500h16V6M10 2v18M5 19.500h10" stroke={c.dim} strokeWidth="3" />
  </Glyph>
);

const FilterShape = () => (
  <Glyph w={22} h={22} color="none">
    <path d="M3 5v12M19 5v12M5 3h12M5 19h12" stroke={c.dim} strokeWidth="2" />
    <path d="M1 1h4v4H1zM17 1h4v4h-4zM1 17h4v4H1zM17 17h4v4h-4z" stroke={c.dim} strokeWidth="2" />
  </Glyph>
);

const FilterSmart = () => (
  <Glyph w={20} h={24} color={c.dim}>
    <path d="M5 11V1h9l5 5v15h-6M13 1v6h6" fill="none" stroke={c.dim} strokeWidth="2" />
    <path d="M0 12h12v12H0z" />
  </Glyph>
);

const LockPixels = () => (
  <Glyph w={22} h={22} color={c.dim}>
    <rect x="1" y="1" width="20" height="20" fill="none" stroke={c.dim} strokeWidth="2" />
    <path d="M7 2h4v5H7zM15 2h5v5h-5zM2 7h5v4H2zM11 7h4v4h-4zM7 11h4v4H7zM15 11h5v4h-5zM2 15h5v5H2zM11 15h4v5h-4z" />
  </Glyph>
);

const LockArtboard = () => (
  <Glyph w={28} h={24} color="none">
    <path d="M5 4v14h18v-9l-6-5z" stroke={c.dim} strokeWidth="2" />
    <path d="M16 4v6h7z" fill={c.dim} />
    <path d="M0 4h2M26 4h2M0 18h2M26 18h2M5 0v2M23 0v2M5 21v2M23 21v2" stroke={c.dim} strokeWidth="2" />
  </Glyph>
);

const Padlock = ({ open }: { open?: boolean }) => {
  const color = open ? c.icon : c.dim;
  return (
    <Glyph w={20} h={24} color={color}>
      <path d="M5 10V7a5 5.500 0 0 1 10 0v3" fill="none" stroke={color} strokeWidth="2" />
      <rect x="1" y="9" width="18" height="13" rx="1" fill={open ? "none" : color} stroke={color} strokeWidth="2" />
      <circle cx="10" cy="15.500" r="2.500" fill={open ? color : c.panel} />
    </Glyph>
  );
};

const Eye = () => (
  <Glyph w={26} h={16}>
    <path d="M0 8C7-2.500 19-2.500 26 8 19 18.500 7 18.500 0 8z" />
    <circle cx="13" cy="8" r="5.500" fill={c.panel} />
    <circle cx="14.500" cy="6.500" r="1.500" />
  </Glyph>
);

const LinkIcon = () => (
  <Glyph w={28} h={16} color="none">
    <path d="M12 3a6 6 0 1 0 0 10M16 3a6 6 0 1 1 0 10M8 8h12" stroke={c.dim} strokeWidth="2.500" />
  </Glyph>
);

const MaskIcon = () => (
  <Glyph w={26} h={20}>
    <path d="M1 0h24q1 0 1 1v18q0 1-1 1H1q-1 0-1-1V1q0-1 1-1zM13 4a6 6 0 1 0 0 12 6 6 0 1 0 0-12z" fillRule="evenodd" />
  </Glyph>
);

const dockIcons: { name: string; active?: boolean; art: React.ReactNode }[] = [
  {
    name: "Actions",
    active: true,
    art: (
      <Glyph w={28} h={28}>
        <path d="M2 0l26 14L2 28z" />
      </Glyph>
    ),
  },
  {
    name: "History",
    art: (
      <Glyph w={30} h={36}>
        <path d="M1 2h9v9H1zM1 14h9v9H1z" fill="none" stroke={c.icon} strokeWidth="2" />
        <path d="M0 25h11v10H0zM16 3h12l-4 4c8 8 6 19-7 25 7-8 8-14 3-20l-4 4z" />
      </Glyph>
    ),
  },
  {
    name: "Brush presets",
    art: (
      <Glyph w={40} h={34}>
        <path d="M0 0h4v4H0zM6 1h8v2H6zM0 6h4v4H0zM6 7h8v2H6zM0 12h4v4H0zM6 13h8v2H6z" />
        <g transform="translate(8 4)">
          <path d="M31.500 0.500c-3 0-5 2-7 4L14 14l4.500 4.500L28 8.500c2-2.500 3.500-5 3.500-8zM12 16l5 5c1 5-4 7-17.500 7 4-2 4-4 5-6 2-4 4-6 7.500-6z" />
        </g>
      </Glyph>
    ),
  },
  {
    name: "Tool presets",
    art: (
      <Glyph w={38} h={34}>
        <path d="M35 1L20 17" stroke={c.icon} strokeWidth="3" />
        <path d="M33 0l3 3-4 6-3-3z" />
        <path d="M17 21L6 31" stroke={c.icon} strokeWidth="8" strokeLinecap="round" />
        <path d="M2 3C6 0 12 1 13 5l1 3 6 4-3 4-6-5C6 13 1 11 1 9l5 0 2-3z" />
        <path d="M23 18l5 4" stroke={c.icon} strokeWidth="4" />
        <circle cx="33" cy="23" r="3.500" fill="none" stroke={c.icon} strokeWidth="3" />
      </Glyph>
    ),
  },
  {
    name: "Brush settings",
    art: (
      <Glyph w={42} h={34}>
        <path d="M0 6C4 4 6 0 11 0c5 0 8 2 8 6s-3 6-8 6C6 12 4 8 0 6zM21 4h18q2 0 2 2t-2 2H21zM6 21h19v4H6q-2 0-2-2t2-2zM27 22l8-9h2q8 10 0 20h-2l-8-9z" />
      </Glyph>
    ),
  },
];

const align = {
  top: [[0, 3, 28, 2], [4, 7, 8, 20], [16, 7, 8, 14]],
  middle: [[0, 15, 28, 2], [4, 5, 8, 21], [16, 9, 8, 14]],
  bottom: [[0, 25, 28, 2], [4, 2, 8, 21], [16, 9, 8, 14]],
  left: [[1, 0, 2, 30], [5, 6, 14, 8], [5, 18, 21, 8]],
  center: [[13, 0, 2, 30], [7, 5, 14, 8], [3, 17, 22, 8]],
  right: [[25, 0, 2, 30], [9, 6, 14, 8], [2, 18, 21, 8]],
  dTop: [[0, 4, 28, 2], [9, 6, 10, 7], [0, 17, 28, 2], [5, 19, 18, 7]],
  dMiddle: [[0, 7, 28, 2], [9, 4, 10, 8], [0, 20, 28, 2], [5, 17, 18, 8]],
  dBottom: [[9, 4, 10, 7], [0, 11, 28, 2], [5, 17, 18, 7], [0, 24, 28, 2]],
  dLeft: [[3, 0, 2, 30], [5, 5, 7, 20], [16, 0, 2, 30], [18, 9, 7, 10]],
  dCenter: [[7, 0, 2, 30], [4, 5, 8, 20], [19, 0, 2, 30], [16, 10, 8, 10]],
  dRight: [[3, 5, 7, 20], [10, 0, 2, 30], [16, 10, 7, 10], [23, 0, 2, 30]],
  auto: [[3, 2, 8, 8], [3, 12, 8, 17], [13, 0, 2, 30], [17, 2, 8, 8], [17, 12, 8, 17]],
};

const modes3d: { name: string; art: React.ReactNode }[] = [
  {
    name: "Orbit",
    art: (
      <Glyph w={34} h={28} color="none">
        <g stroke={c.dim} strokeWidth="2">
          <ellipse cx="18" cy="8" rx="7" ry="7.500" />
          <path d="M11 7C3 7-1 12 2 17c1 2 4 5 7 7M25 11c4 4 9 8 8 12-1 3-6 3-11 2" />
        </g>
        <path d="M9 17l9 10H5z" fill={c.dim} />
      </Glyph>
    ),
  },
  {
    name: "Roll",
    art: (
      <Glyph w={32} h={32} color="none">
        <g stroke={c.dim} strokeWidth="2">
          <circle cx="16" cy="16" r="7" />
          <path d="M1 15a15 15 0 1 0 8-12" />
        </g>
        <path d="M2 10L6 0l6 6z" fill={c.dim} />
      </Glyph>
    ),
  },
  {
    name: "Pan",
    art: (
      <Glyph w={32} h={32} color="none">
        <path
          d="M16 1l5 6h-3v7h7v-3l6 5-6 5v-3h-7v7h3l-5 6-5-6h3v-7H7v3l-6-5 6-5v3h7V7h-3z"
          stroke={c.dim}
          strokeWidth="2"
        />
      </Glyph>
    ),
  },
  {
    name: "Slide",
    art: (
      <Glyph w={34} h={32} color={c.dim}>
        <circle cx="17" cy="15" r="7" fill="none" stroke={c.dim} strokeWidth="2" />
        <path d="M17 0l5 5h-3v3h-4V5h-3zM0 13l6-4v2h4v5H6v2zM34 13l-6-4v2h-4v5h4v2zM17 31l-8-6h4v-3h8v3h4z" />
      </Glyph>
    ),
  },
  {
    name: "Zoom camera",
    art: (
      <Glyph w={36} h={26} color={c.dim}>
        <path d="M1 6h14q1 0 1 1v13q0 1-1 1H1q-1 0-1-1V7q0-1 1-1zM17 13l5-6v13z" />
        <path d="M35 1L25 13l10 12M30 7q5 6 0 12" fill="none" stroke={c.dim} strokeWidth="2" />
      </Glyph>
    ),
  },
];

const slots = (names: (keyof typeof align)[]) => (
  <OptionSet>
    {names.map((n) => (
      <OptionSlot key={n} aria-label={n}>
        <Bars r={align[n]} />
      </OptionSlot>
    ))}
  </OptionSet>
);

const PercentField = ({ id }: { id: string }) => (
  <Percent>
    <PercentInput id={id} defaultValue="100%" />
    <PercentButton aria-label="Show slider">
      <Chevron color="#757575" />
    </PercentButton>
  </Percent>
);

export default function App() {
  return (
    <Window>
      <GlobalStyle />
      <MenuBar>
        <Logo>Ps</Logo>
        <Menu aria-label="Main menu">
          {["File", "Edit", "Image", "Layer", "Type", "Select", "Filter", "3D", "View", "Window", "Help"].map((m) => (
            <MenuButton key={m}>{m}</MenuButton>
          ))}
        </Menu>
        <WindowControls>
          <WindowButton aria-label="Minimize">
            <Glyph w={20} h={20} color={c.dim}>
              <path d="M0 13h20v6H0z" />
            </Glyph>
          </WindowButton>
          <WindowButton aria-label="Restore">
            <Glyph w={24} h={20} color={c.dim}>
              <path d="M8 0h16v14h-6v-3h2V4h-8v3H8zM0 7h16v13H0zM4 11v5h8v-5z" fillRule="evenodd" />
            </Glyph>
          </WindowButton>
          <WindowButton $wide aria-label="Close">
            <Glyph w={20} h={16} color="none">
              <path d="M2 0l16 16M18 0L2 16" stroke={c.dim} strokeWidth="4" />
            </Glyph>
          </WindowButton>
        </WindowControls>
        <LoadStrip />
      </MenuBar>

      <OptionsBar>
        <Grip $vertical />
        <MoveIndicator aria-label="Move tool presets">
          <MoveArrows />
          <Chevron />
        </MoveIndicator>
        <Rule $left={19} $right={13} />
        <AutoSelect aria-label="Auto-select">
          <LayersCursor />
        </AutoSelect>
        <Field $width={114}>
          <Select $pad={15} aria-label="Auto-select target">
            <option>Layer</option>
          </Select>
          <Chevron />
        </Field>
        <Rule />
        <OptionSlot aria-label="Show transform controls">
          <TransformBox />
        </OptionSlot>
        <Rule $left={17} />
        <OptionGroup>
          {slots(["top", "middle", "bottom"])}
          {slots(["left", "center", "right"])}
        </OptionGroup>
        <Rule />
        <OptionGroup>
          {slots(["dTop", "dMiddle", "dBottom"])}
          {slots(["dLeft", "dCenter", "dRight"])}
        </OptionGroup>
        <Rule />
        {slots(["auto"])}
        <Rule $right={18} />
        <ModeLabel>3D Mode:</ModeLabel>
        {modes3d.map((m) => (
          <OptionSlot key={m.name} aria-label={m.name}>
            {m.art}
          </OptionSlot>
        ))}
        <OptionsRight>
          <BareButton aria-label="Search">
            <Lens />
          </BareButton>
          <SpacedButton $gap={31} aria-label="Workspace">
            <Glyph w={32} h={26}>
              <path d="M0 0h32v26H0zM2 4v20h28V4z" fillRule="evenodd" />
              <path d="M4 6h6v14H4zM6 8v2h2V8zM6 12v2h2v-2zM6 16v2h2v-2z" fillRule="evenodd" />
            </Glyph>
          </SpacedButton>
          <SpacedButton $gap={21} aria-label="Workspace menu">
            <Chevron />
          </SpacedButton>
          <SpacedButton $gap={29} aria-label="Share">
            <Glyph w={30} h={36} color="none">
              <path d="M10 13H1v18h28V13h-9M15 22V2M9 8l6-7 6 7" stroke={c.icon} strokeWidth="2" />
            </Glyph>
          </SpacedButton>
        </OptionsRight>
      </OptionsBar>

      <Workspace>
        <ToolBox aria-label="Tools">
          <ToolHeader>
            <BareButton aria-label="Collapse tools">
              <Double left />
            </BareButton>
          </ToolHeader>
          <ToolBody>
            <Grip />
            <ToolGrid $first>
              {tools.map((t) => (
                <ToolButton key={t.name} aria-label={t.name} $active={t.active} $more={t.more}>
                  {t.art}
                </ToolButton>
              ))}
            </ToolGrid>
            <SwatchArea>
              <Chip $color="#000" $area="1 / 2 / 3 / 4" $ring aria-label="Foreground color" />
              <Chip $color="#fff" $area="2 / 3 / 4 / 5" aria-label="Background color" />
              <SwapButton aria-label="Swap colors">
                <Glyph w={20} h={20}>
                  <path d="M0 5l6-5v4h11v10h3l-5 6-5-6h4V7H6v4z" />
                </Glyph>
              </SwapButton>
              <DefaultButton aria-label="Default colors">
                <Glyph w={20} h={20}>
                  <path d="M6 6h14v14H6z" />
                  <rect x="1" y="1" width="12" height="12" fill="#111" stroke={c.icon} strokeWidth="2" />
                </Glyph>
              </DefaultButton>
            </SwatchArea>
            <ToolGrid>
              <ToolButton aria-label="Quick mask">
                <QuickMask />
              </ToolButton>
              <ToolButton aria-label="Screen mode" $more>
                <ScreenMode />
              </ToolButton>
            </ToolGrid>
          </ToolBody>
        </ToolBox>
        <Split />

        <Document>
          <DocTabs>
            <DocTab>
              Untitled-1 @ 66,7% (RGB/8)
              <BareButton aria-label="Close document">
                <Glyph w={12} h={12} color="none">
                  <path d="M1 1l10 10M11 1L1 11" stroke="#b0b0b0" strokeWidth="2" />
                </Glyph>
              </BareButton>
            </DocTab>
          </DocTabs>
          <Stage>
            <Paper />
            <Gutter $width={32} />
          </Stage>
          <StatusBar>
            <ZoomInput aria-label="Zoom" defaultValue="66,67%" />
            <DocInfo>
              Doc: 9,01M/0 bytes
              <Glyph w={8} h={18} color="none">
                <path d="M1 1l5 8-5 8" stroke={c.icon} strokeWidth="2" />
              </Glyph>
            </DocInfo>
            <StatusCorner />
          </StatusBar>

          <ActionsPanel>
            <TabStrip>
              <Tab $active>Actions</Tab>
              <TabRest>
                <BareButton aria-label="Collapse panel">
                  <Double w={18} h={14} />
                </BareButton>
                <TabRule />
                <BareButton aria-label="Actions menu">
                  <Hamburger />
                </BareButton>
              </TabRest>
            </TabStrip>
            <ActionsBody>
              <ActionsList>
                <ActionRow>
                  <CheckLabel aria-label="Include Default Actions">
                    <input type="checkbox" defaultChecked />
                    <Glyph w={18} h={16} color="none">
                      <path d="M1 8l6 6L17 1" stroke={c.icon} strokeWidth="3.500" />
                    </Glyph>
                  </CheckLabel>
                  <RowIcons>
                    <Glyph w={22} h={22} color="none">
                      <path d="M1 1h20v20H1zM1 5.500h20M6 13h10" stroke={c.icon} strokeWidth="2" />
                    </Glyph>
                    <Glyph w={8} h={18} color="none">
                      <path d="M1 1l5 8-5 8" stroke={c.icon} strokeWidth="2" />
                    </Glyph>
                    <Folder />
                  </RowIcons>
                  <ActionName>Default Actions</ActionName>
                </ActionRow>
              </ActionsList>
              <Gutter $width={32} />
            </ActionsBody>
            <FooterRule />
            <ActionsFooter>
              <BareButton aria-label="Stop">
                <Glyph w={14} h={14} color={c.dim}>
                  <path d="M0 0h14v14H0z" />
                </Glyph>
              </BareButton>
              <BareButton aria-label="Record">
                <Glyph w={18} h={18} color={c.dim}>
                  <circle cx="9" cy="9" r="9" />
                </Glyph>
              </BareButton>
              <BareButton aria-label="Play">
                <Glyph w={18} h={18} color={c.dim}>
                  <path d="M0 0l18 9L0 18z" />
                </Glyph>
              </BareButton>
              <BareButton aria-label="New set">
                <Folder />
              </BareButton>
              <BareButton aria-label="New action">
                <NewPage />
              </BareButton>
              <BareButton aria-label="Delete">
                <Trash />
              </BareButton>
            </ActionsFooter>
            <ResizeBar>
              <Grip />
            </ResizeBar>
          </ActionsPanel>
        </Document>
        <Split />

        <RightSide>
          <SideHeader>
            <BareButton aria-label="Expand dock">
              <Double left />
            </BareButton>
            <BareButton aria-label="Collapse panels">
              <Double />
            </BareButton>
          </SideHeader>
          <SideBody>
            <IconDock>
              {dockIcons.map((d) => (
                <DockGroup key={d.name}>
                  <Grip />
                  <DockButton aria-label={d.name} $active={d.active}>
                    {d.art}
                  </DockButton>
                </DockGroup>
              ))}
            </IconDock>
            <Split />
            <Panels>
              <Panel $first>
                <TabStrip>
                  <Tab $active>Color</Tab>
                  <Tab>Swatches</Tab>
                  <TabRest>
                    <BareButton aria-label="Color menu">
                      <Hamburger />
                    </BareButton>
                  </TabRest>
                </TabStrip>
                <ColorBody>
                  <ColorChips>
                    <ColorChip $area="1 / 1 / 3 / 3" $front aria-label="Foreground" />
                    <ColorChip $area="2 / 2 / 4 / 4" aria-label="Background" />
                  </ColorChips>
                  <ColorField>
                    <Glyph w={12} h={12} color="none">
                      <path d="M0 1a11 11 0 0 1 11 11" stroke="#fff" strokeWidth="2" />
                    </Glyph>
                  </ColorField>
                  <HueColumn aria-label="Hue">
                    <Glyph w={17} h={18}>
                      <path
                        d="M2 6q0-5 4-5 3 0 10 8-7 8-10 8-4 0-4-5z"
                        stroke="#2a2a2a"
                        strokeWidth="2"
                      />
                    </Glyph>
                    <HueBar />
                    <input type="range" min="0" max="360" defaultValue="0" />
                  </HueColumn>
                </ColorBody>
              </Panel>

              <Panel>
                <TabStrip>
                  <Tab $active>Adjustments</Tab>
                  <TabRest>
                    <BareButton aria-label="Adjustments menu">
                      <Hamburger />
                    </BareButton>
                  </TabRest>
                </TabStrip>
                <AdjustBody>
                  <AdjustTitle>Add an adjustment</AdjustTitle>
                  <AdjustRows>
                    {adjustments.map((row, i) => (
                      <AdjustRow key={i}>
                        {row.map((a) => (
                          <AdjustButton key={a.name} aria-label={a.name}>
                            {a.art}
                          </AdjustButton>
                        ))}
                      </AdjustRow>
                    ))}
                  </AdjustRows>
                </AdjustBody>
              </Panel>

              <Panel $grow>
                <TabStrip $compact>
                  <Tab $active>Layers</Tab>
                  <Tab>Channels</Tab>
                  <Tab>Paths</Tab>
                  <TabRest>
                    <BareButton aria-label="Layers menu">
                      <Hamburger />
                    </BareButton>
                  </TabRest>
                </TabStrip>
                <LayerBar $tall>
                  <Field $width={180} $dim>
                    <Lens s={22} color={c.dim} />
                    <Select $pad={43} aria-label="Filter kind">
                      <option>Kind</option>
                    </Select>
                    <Chevron color="#757575" />
                  </Field>
                  <FilterIcons>
                    <BareButton aria-label="Pixel layers"><FilterImage /></BareButton>
                    <BareButton aria-label="Adjustment layers"><HalfDisc color={c.dim} /></BareButton>
                    <BareButton aria-label="Type layers"><FilterType /></BareButton>
                    <BareButton aria-label="Shape layers"><FilterShape /></BareButton>
                    <BareButton aria-label="Smart objects"><FilterSmart /></BareButton>
                  </FilterIcons>
                  <FilterToggle aria-label="Layer filtering">
                    <input type="checkbox" />
                  </FilterToggle>
                </LayerBar>
                <LayerBar>
                  <Field $width={262} $dim>
                    <Select $pad={15} aria-label="Blend mode">
                      <option>Normal</option>
                    </Select>
                    <Chevron color="#757575" />
                  </Field>
                  <PushLabel htmlFor="opacity">Opacity:</PushLabel>
                  <PercentField id="opacity" />
                </LayerBar>
                <LayerBar $last>
                  <LockLabel>Lock:</LockLabel>
                  <LockIcons>
                    <BareButton aria-label="Lock transparency"><LockPixels /></BareButton>
                    <BareButton aria-label="Lock pixels"><Brush s={27} color={c.dim} /></BareButton>
                    <BareButton aria-label="Lock position"><MoveArrows s={26} color={c.dim} /></BareButton>
                    <BareButton aria-label="Lock artboard"><LockArtboard /></BareButton>
                    <BareButton aria-label="Lock all"><Padlock /></BareButton>
                  </LockIcons>
                  <PushLabel htmlFor="fill">Fill:</PushLabel>
                  <PercentField id="fill" />
                </LayerBar>
                <LayerArea>
                  <LayerList>
                    <LayerRow>
                      <EyeCell aria-label="Toggle visibility">
                        <Eye />
                      </EyeCell>
                      <LayerMain>
                        <Thumb />
                        Background
                        <Padlock open />
                      </LayerMain>
                    </LayerRow>
                  </LayerList>
                  <Gutter $width={30} />
                </LayerArea>
                <LayerFooter>
                  <FooterButton aria-label="Link layers"><LinkIcon /></FooterButton>
                  <FooterButton aria-label="Layer style" $marker="#7a7a7a"><FxText>fx</FxText></FooterButton>
                  <FooterButton aria-label="Add mask"><MaskIcon /></FooterButton>
                  <FooterButton aria-label="New adjustment layer" $marker="#ffffff"><HalfDisc /></FooterButton>
                  <FooterButton aria-label="New group"><Folder /></FooterButton>
                  <FooterButton aria-label="New layer"><NewPage /></FooterButton>
                  <FooterButton aria-label="Delete layer"><Trash /></FooterButton>
                </LayerFooter>
              </Panel>
            </Panels>
          </SideBody>
        </RightSide>
      </Workspace>

      <Dialog role="alertdialog" aria-label="Error">
        <DialogTitle>
          Error
          <BareButton aria-label="Close">
            <Glyph w={16} h={16} color="none">
              <path d="M1 1l14 14M15 1L1 15" stroke="#999" strokeWidth="1.200" />
            </Glyph>
          </BareButton>
        </DialogTitle>
        <DialogBody>
          <DialogIcon>
            <Glyph w={44} h={44}>
              <circle cx="22" cy="22" r="21.500" fill="#f03a17" stroke="#a03020" />
              <path d="M11 11l22 22M33 11L11 33" stroke="#fff" strokeWidth="4" />
            </Glyph>
          </DialogIcon>
          <DialogText>
            {"Error 1: XML error in line 10264\n- Not well-formed (invalid token).\nLine: 9600\n->\treturn new XML(str);"}
          </DialogText>
        </DialogBody>
        <DialogFooter>
          <OkButton>OK</OkButton>
        </DialogFooter>
      </Dialog>
    </Window>
  );
}
